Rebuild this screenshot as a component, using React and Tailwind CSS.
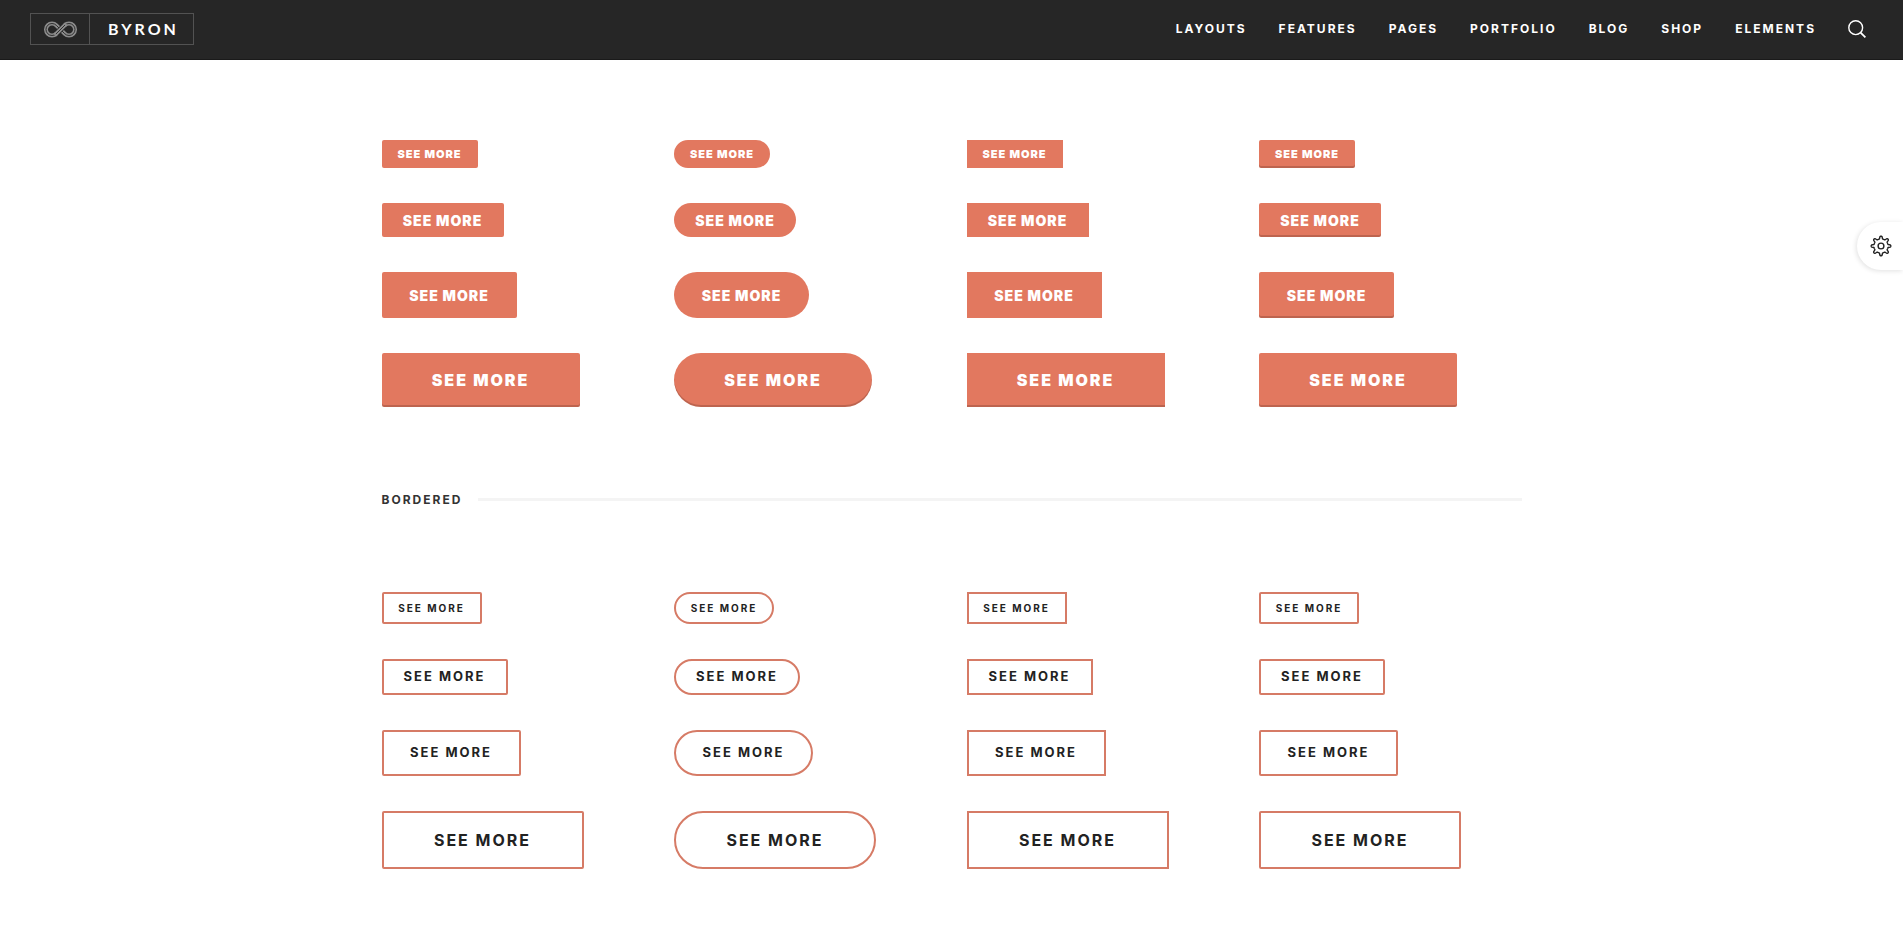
const NAV = ["Layouts", "Features", "Pages", "Portfolio", "Blog", "Shop", "Elements"];

const SHAPES = [
  { name: "small-radius", radius: "rounded-xs", edge: false },
  { name: "pill", radius: "rounded-full", edge: false },
  { name: "square", radius: "rounded-none", edge: false },
  { name: "raised", radius: "rounded-xs", edge: true },
];

const FILLED = [
  { name: "small", box: "h-7 w-24 text-[11px] tracking-[1px]", edge: false },
  { name: "medium", box: "h-[34px] w-[122px] text-[14px] tracking-[1px]", edge: false },
  { name: "large", box: "h-[46px] w-[135px] text-[14px] tracking-[1px]", edge: false },
  { name: "extra-large", box: "h-[54px] w-[198px] text-[16px] tracking-[2px]", edge: true },
];

const BORDERED = [
  { name: "small", box: "h-8 w-[100px] text-[10px] tracking-[2px]" },
  { name: "medium", box: "h-9 w-[126px] text-[13px] tracking-[2px]" },
  { name: "large", box: "h-[46px] w-[139px] text-[13px] tracking-[2px]" },
  { name: "extra-large", box: "h-[58px] w-[202px] text-[16px] tracking-[2px]" },
];

const LOOP = "M20.760 12.740A6 6 0 1 0 20.760 4.260M12.240 12.740A6 6 0 1 1 12.240 4.260L20.760 12.740";
const STRAND = "M12.240 12.740L20.760 4.260";

function Logo() {
  return (
    <a href="#home" aria-label="Byron" className="flex h-8 border border-[#525252] text-white">
      <span className="flex w-[59px] items-center justify-center border-r border-[#525252]">
        <svg width="33" height="17" viewBox="0 0 33 17" fill="none">
          <path d={LOOP} stroke="#8c8c8c" strokeWidth="4" />
          <path d={LOOP} stroke="#303030" strokeWidth="1" />
          <path d={STRAND} stroke="#262626" strokeWidth="5.500" />
          <path d={STRAND} stroke="#8c8c8c" strokeWidth="4" strokeLinecap="square" />
          <path d={STRAND} stroke="#303030" strokeWidth="1" strokeLinecap="square" />
        </svg>
      </span>
      <span className="flex w-[103px] items-center justify-center pl-1 font-['Lato',sans-serif] text-[16px] font-bold tracking-[3px]">
        BYRON
      </span>
    </a>
  );
}

function GearIcon() {
  const points = [];
  for (let i = 0; i < 160; i += 1) {
    const angle = (i / 160) * Math.PI * 2;
    const wave = Math.tanh(2.600 * (Math.cos(angle * 8) - 0.350));
    const r = 8.500 + 1.400 * wave;
    points.push(`${(11 + r * Math.sin(angle)).toFixed(2)},${(11 - r * Math.cos(angle)).toFixed(2)}`);
  }
  return (
    <svg width="22" height="22" viewBox="0 0 22 22" fill="none" stroke="#222" strokeWidth="1.400" strokeLinejoin="round">
      <polygon points={points.join(" ")} />
      <circle cx="11" cy="11" r="2.900" />
    </svg>
  );
}

function ButtonGrid({ sizes, look, raised }) {
  return (
    <div className="grid grid-cols-4 gap-[30px]">
      {SHAPES.map((shape) => (
        <div key={shape.name} className="flex flex-col items-start gap-[35px]">
          {sizes.map((size) => (
            <button
              key={size.name}
              type="button"
              className={`flex items-center justify-center whitespace-nowrap uppercase ${look} ${size.box} ${shape.radius} ${
                raised && (shape.edge || size.edge) ? "shadow-[inset_0_-2px_0_rgba(0,0,0,0.16)]" : ""
              }`}
            >
              See more
            </button>
          ))}
        </div>
      ))}
    </div>
  );
}

export default function App() {
  return (
    <div className="min-h-screen bg-white font-['Inter',sans-serif] text-[#222]">
      <header className="flex h-[60px] items-center justify-between border-b border-[#1a1a1a] bg-[#262626] pr-[37px] pb-px pl-[30px]">
        <Logo />
        <div className="flex items-center gap-8">
          <nav className="flex gap-8">
            {NAV.map((item) => (
              <a key={item} href={`#${item.toLowerCase()}`} className="text-[12px] leading-5 font-bold tracking-[2px] text-white uppercase">
                {item}
              </a>
            ))}
          </nav>
          <button type="button" aria-label="Search" className="text-white">
            <svg width="18" height="18" viewBox="0 0 18 18" fill="none" stroke="currentColor" strokeWidth="1.400">
              <circle cx="7.700" cy="7.700" r="6.900" />
              <path d="M12.600 12.600L17.400 17.400" strokeWidth="1.800" />
            </svg>
          </button>
        </div>
      </header>

      <main className="mx-auto max-w-[1140px] py-20">
        <ButtonGrid sizes={FILLED} look="bg-[#e2785f] font-black text-white" raised />
        <div className="my-20 flex h-[25px] items-center gap-4">
          <h2 className="text-[12px] font-bold tracking-[2px] text-[#333] uppercase">Bordered</h2>
          <div className="h-[3px] flex-1 bg-[#f4f4f4]" />
        </div>
        <ButtonGrid sizes={BORDERED} look="border-2 border-[#d67b66] font-bold text-[#222]" raised={false} />
      </main>

      <button
        type="button"
        aria-label="Settings"
        className="fixed top-[222px] right-0 flex h-12 w-[46px] items-center justify-center rounded-l-full bg-white pl-[2px] shadow-[-1px_1px_5px_rgba(0,0,0,0.12)]"
      >
        <GearIcon />
      </button>
    </div>
  );
}
